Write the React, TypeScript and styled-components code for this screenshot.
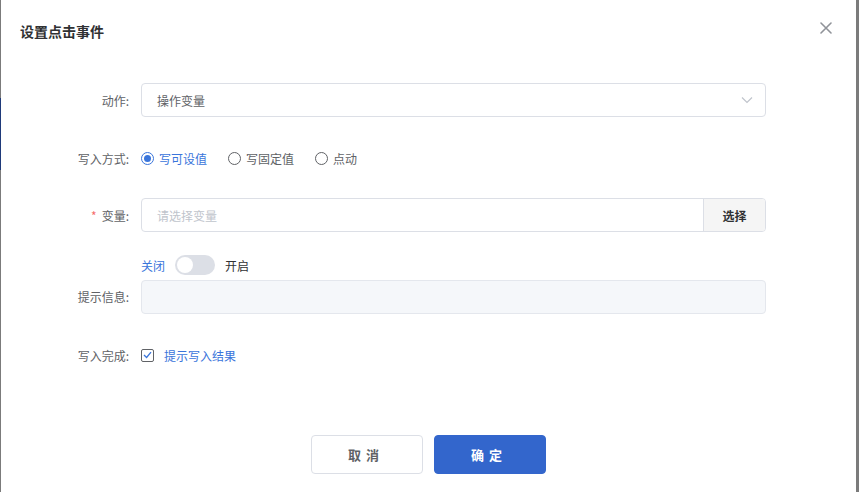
import React from "react";
import styled, { createGlobalStyle } from "styled-components";

const Global = createGlobalStyle`
  html, body { margin: 0; padding: 0; background: #fff; }
  body { font-family: "Noto Sans CJK SC", "Noto Sans", sans-serif; }
  * { box-sizing: border-box; }
`;

const Dialog = styled.div`
  position: relative;
  width: 859px;
  height: 492px;
  background: #fff;
  border-left: 1px solid #7b7b7b;
  border-right: 3px solid #7b7b7b;
  display: flex;
  flex-direction: column;
`;

const SideMark = styled.div`
  position: absolute;
  left: -1px;
  top: 98px;
  width: 1px;
  height: 72px;
  background: #1f3a7a;
`;

const Header = styled.div`
  height: 62px;
  display: flex;
  align-items: center;
  justify-content: space-between;
  padding: 0 22px 0 19px;
`;

const Title = styled.div`
  font-size: 14px;
  font-weight: 700;
  color: #303133;
`;

const Close = styled.button`
  border: 0;
  background: transparent;
  padding: 0;
  width: 16px;
  height: 16px;
  display: flex;
  align-items: center;
  justify-content: center;
  margin-top: -6px;
  cursor: pointer;
`;

const Form = styled.div`
  display: flex;
  flex-direction: column;
  padding-top: 21px;
  padding-right: 90px;
`;

const Item = styled.div<{ $mb: number; $align?: string }>`
  display: flex;
  align-items: ${(p) => p.$align || "center"};
  margin-bottom: ${(p) => p.$mb}px;
`;

const Label = styled.div<{ $bottom?: boolean }>`
  width: 140px;
  flex: none;
  text-align: right;
  padding-right: 12px;
  font-size: 12px;
  color: #606266;
  line-height: ${(p) => (p.$bottom ? "34px" : "normal")};
`;

const Star = styled.span`
  color: #f56c6c;
  margin-right: 5px;
`;

const Control = styled.div`
  flex: 1;
  display: flex;
  flex-direction: column;
`;

const Select = styled.div`
  height: 34px;
  border: 1px solid #dcdfe6;
  border-radius: 4px;
  display: flex;
  align-items: center;
  justify-content: space-between;
  padding: 0 12px 0 15px;
  font-size: 12px;
  color: #606266;
`;

const RadioGroup = styled.div`
  height: 34px;
  display: flex;
  align-items: center;
`;

const Radio = styled.label<{ $on?: boolean }>`
  display: flex;
  align-items: center;
  margin-right: 21px;
  font-size: 12px;
  color: ${(p) => (p.$on ? "#3a75db" : "#606266")};
`;

const RadioDot = styled.span<{ $on?: boolean }>`
  width: 13px;
  height: 13px;
  border-radius: 50%;
  border: 1px solid ${(p) => (p.$on ? "#3a75db" : "#606266")};
  margin-right: 5px;
  display: flex;
  align-items: center;
  justify-content: center;
  &::after {
    content: "";
    width: 7px;
    height: 7px;
    border-radius: 50%;
    background: ${(p) => (p.$on ? "#3a75db" : "transparent")};
  }
`;

const InputGroup = styled.div`
  height: 34px;
  display: flex;
  border: 1px solid #dcdfe6;
  border-radius: 4px;
  overflow: hidden;
`;

const Placeholder = styled.div`
  flex: 1;
  display: flex;
  align-items: center;
  padding-left: 15px;
  font-size: 12px;
  color: #c0c4cc;
`;

const Append = styled.div`
  width: 62px;
  border-left: 1px solid #dcdfe6;
  background: #f5f5f5;
  display: flex;
  align-items: center;
  justify-content: center;
  font-size: 12px;
  font-weight: 600;
  color: #303133;
`;

const SwitchRow = styled.div`
  height: 20px;
  display: flex;
  align-items: center;
  margin-bottom: 5px;
  font-size: 12px;
`;

const SwitchText = styled.span<{ $on?: boolean }>`
  color: ${(p) => (p.$on ? "#3a75db" : "#303133")};
`;

const Track = styled.span`
  width: 40px;
  height: 20px;
  border-radius: 10px;
  background: #dcdfe6;
  margin: 0 10px;
  padding: 2px;
  display: flex;
  align-items: center;
  &::after {
    content: "";
    width: 16px;
    height: 16px;
    border-radius: 50%;
    background: #fff;
  }
`;

const DisabledInput = styled.div`
  height: 34px;
  border: 1px solid #e4e7ed;
  border-radius: 4px;
  background: #f5f7fa;
`;

const CheckRow = styled.label`
  height: 34px;
  display: flex;
  align-items: center;
  font-size: 12px;
  color: #3a75db;
`;

const CheckBox = styled.span`
  width: 13px;
  height: 13px;
  border: 1px solid #606266;
  border-radius: 2px;
  margin-right: 10px;
  display: flex;
  align-items: center;
  justify-content: center;
`;

const Footer = styled.div`
  margin-top: auto;
  height: 57px;
  display: flex;
  justify-content: center;
  gap: 11px;
  padding-right: 1px;
`;

const Btn = styled.button<{ $primary?: boolean }>`
  width: 112px;
  height: 39px;
  border-radius: 4px;
  font-family: inherit;
  font-size: 13px;
  font-weight: 700;
  letter-spacing: 5px;
  padding-left: 5px;
  border: 1px solid ${(p) => (p.$primary ? "#3366cc" : "#dcdfe6")};
  background: ${(p) => (p.$primary ? "#3366cc" : "#fff")};
  color: ${(p) => (p.$primary ? "#fff" : "#606266")};
`;

export default function App() {
  return (
    <>
      <Global />
      <Dialog>
        <SideMark />
        <Header>
          <Title>设置点击事件</Title>
          <Close aria-label="close">
            <svg width="12" height="12" viewBox="0 0 12 12">
              <path d="M1 1L11 11M11 1L1 11" stroke="#909399" strokeWidth="1.6" strokeLinecap="round" />
            </svg>
          </Close>
        </Header>
        <Form>
          <Item $mb={24}>
            <Label>动作:</Label>
            <Control>
              <Select>
                <span>操作变量</span>
                <svg width="12" height="8" viewBox="0 0 12 8">
                  <path d="M1 1.5L6 6.5L11 1.5" stroke="#c0c4cc" strokeWidth="1.2" fill="none" />
                </svg>
              </Select>
            </Control>
          </Item>
          <Item $mb={23}>
            <Label>写入方式:</Label>
            <Control>
              <RadioGroup>
                <Radio $on>
                  <RadioDot $on />
                  写可设值
                </Radio>
                <Radio>
                  <RadioDot />
                  写固定值
                </Radio>
                <Radio>
                  <RadioDot />
                  点动
                </Radio>
              </RadioGroup>
            </Control>
          </Item>
          <Item $mb={23}>
            <Label>
              <Star>*</Star>变量:
            </Label>
            <Control>
              <InputGroup>
                <Placeholder>请选择变量</Placeholder>
                <Append>选择</Append>
              </InputGroup>
            </Control>
          </Item>
          <Item $mb={24} $align="flex-end">
            <Label $bottom>提示信息:</Label>
            <Control>
              <SwitchRow>
                <SwitchText $on>关闭</SwitchText>
                <Track />
                <SwitchText>开启</SwitchText>
              </SwitchRow>
              <DisabledInput />
            </Control>
          </Item>
          <Item $mb={0}>
            <Label>写入完成:</Label>
            <Control>
              <CheckRow>
                <CheckBox>
                  <svg width="9" height="8" viewBox="0 0 9 8">
                    <path d="M1 4L3.6 6.5L8 1.2" stroke="#3a75db" strokeWidth="1.3" fill="none" />
                  </svg>
                </CheckBox>
                提示写入结果
              </CheckRow>
            </Control>
          </Item>
        </Form>
        <Footer>
          <Btn>取消</Btn>
          <Btn $primary>确定</Btn>
        </Footer>
      </Dialog>
    </>
  );
}
